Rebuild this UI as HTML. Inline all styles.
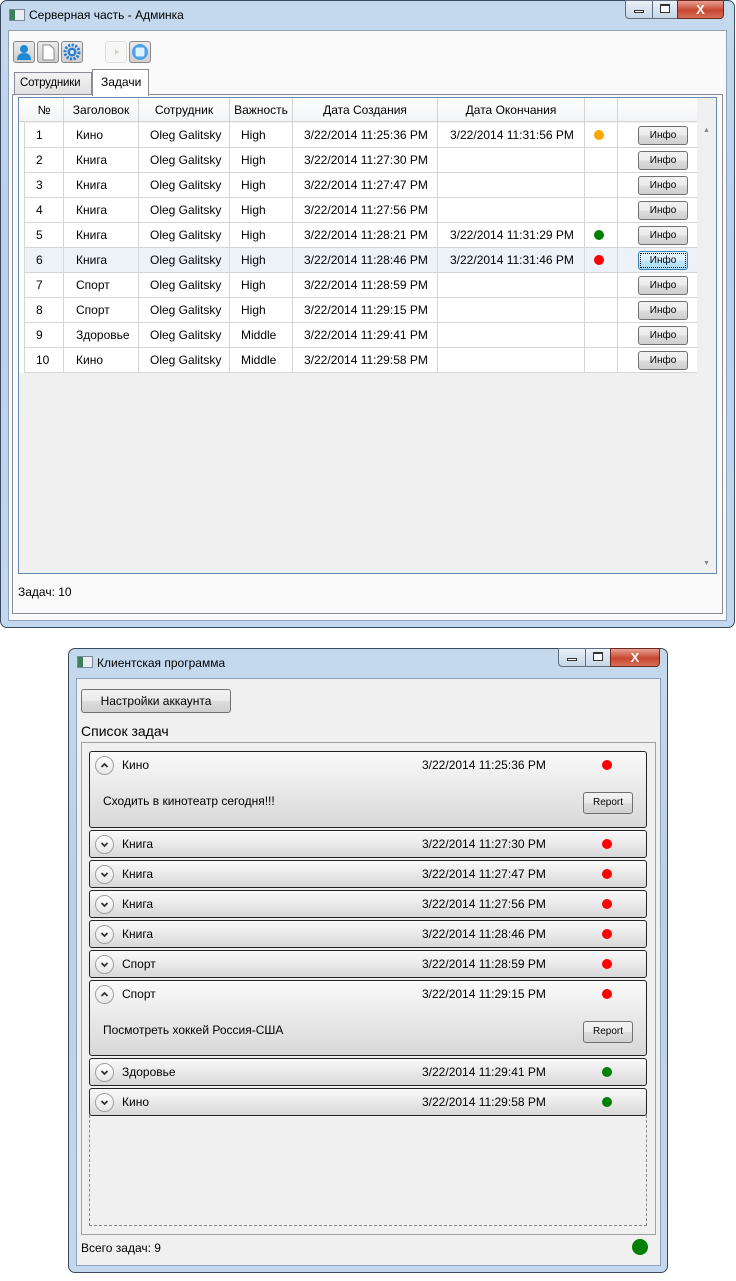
<!DOCTYPE html>
<html><head><meta charset="utf-8"><style>
*{box-sizing:border-box;margin:0;padding:0}
body{width:736px;height:1281px;background:#fff;position:relative;font-family:"Liberation Sans","DejaVu Sans",sans-serif;font-size:12px;color:#000;overflow:hidden}
.a{position:absolute}
.frame{border:1px solid #3b4a5c;border-radius:7px;background:linear-gradient(180deg,#c5d9ee 0%,#b8d0ea 40%,#c3d8ee 100%)}
.client{background:#f0f0f0;border:1px solid #8da2b8}
.ttl{font-size:12px;color:#000}
.appic{width:16px;height:12px;border:1px solid #7a8a99;background:linear-gradient(90deg,#3d7f5a 0 5px,#e8eef4 5px)}
.wb{height:19px;border:1px solid #5f6f80;background:linear-gradient(#e9f0f8,#c7d6e6);}
.xb{height:19px;border:1px solid #6b2a20;background:linear-gradient(#e9a193,#c8462f 55%,#d6705a);color:#fff;font-weight:bold;text-align:center;font-size:13px;line-height:17px}
.cell{position:absolute;top:0;height:25px;line-height:24px;border-right:1px solid #d5d5d5}
.row{position:absolute;left:25px;width:672px;height:25px;border-bottom:1px solid #d5d5d5;background:#fff}
.btn{position:absolute;border:1px solid #707070;border-radius:3px;background:linear-gradient(#f2f2f2 0%,#ebebeb 50%,#dddddd 51%,#cfcfcf 100%);text-align:center}
.info{left:613px;top:3px;width:50px;height:19px;font-size:10px;line-height:17px}
.dot{position:absolute;border-radius:50%}
.exp{position:absolute;left:89px;width:558px;border:1px solid #222;border-radius:3px;background:linear-gradient(#fafafa,#e2e2e2 70%,#d8d8d8)}
.chev{position:absolute;left:5px;top:4px;width:19px;height:19px;border:1px solid #a0a0a0;border-radius:50%;background:linear-gradient(#fff,#e6e6e6)}
.chev svg{position:absolute;left:0;top:0}
.et{position:absolute;left:32px;top:6px}
.ed{position:absolute;left:332px;top:6px}
.edot{position:absolute;left:512px;top:8px;width:10px;height:10px;border-radius:50%}
</style></head><body>

<!-- Window 1 -->
<div class="a frame" style="left:0;top:0;width:735px;height:628px"></div>
<div class="a appic" style="left:9px;top:9px"></div>
<div class="a ttl" style="left:29px;top:8px">Серверная часть - Админка</div>
<div class="a wb" style="left:625px;top:0;width:28px;border-radius:0 0 0 4px"><div style="margin:9px auto 0;width:10px;height:3px;border:1px solid #333;background:#fff"></div></div>
<div class="a wb" style="left:652px;top:0;width:26px"><div style="margin:3px auto 0;width:10px;height:9px;border:1px solid #333;border-top-width:2px;background:#fff"></div></div>
<div class="a xb" style="left:677px;top:0;width:47px;border-radius:0 0 4px 0">X</div>
<div class="a client" style="left:8px;top:30px;width:719px;height:591px;background:#fafafa"></div>

<!-- toolbar -->
<div class="a" style="left:13px;top:41px;width:22px;height:22px;border:1px solid #888;border-radius:3px;background:linear-gradient(#eaeaea,#cfcfcf)"><svg width="20" height="20"><circle cx="10" cy="7" r="4" fill="#1e8ad6"/><path d="M3 18 Q3 11 10 11 Q17 11 17 18Z" fill="#1e8ad6"/></svg></div>
<div class="a" style="left:37px;top:41px;width:22px;height:22px;border:1px solid #888;border-radius:3px;background:linear-gradient(#eaeaea,#cfcfcf)"><svg width="20" height="20"><path d="M5 3h7l4 4v11H5Z" fill="#fff" stroke="#888"/></svg></div>
<div class="a" style="left:61px;top:41px;width:22px;height:22px;border:1px solid #888;border-radius:3px;background:linear-gradient(#eaeaea,#cfcfcf)"><svg width="20" height="20"><circle cx="10" cy="10" r="7" fill="none" stroke="#2a7fd0" stroke-width="3" stroke-dasharray="2.2 1.4"/><circle cx="10" cy="10" r="4.5" fill="#2a7fd0"/><circle cx="10" cy="10" r="2" fill="#dfe9f5"/></svg></div>
<div class="a" style="left:105px;top:41px;width:22px;height:22px;border:1px solid #ddd;border-radius:3px;background:#f6f6f6"><svg width="20" height="20"><path d="M9 7l4 3-4 3Z" fill="#cfd8c0"/></svg></div>
<div class="a" style="left:129px;top:41px;width:22px;height:22px;border:1px solid #888;border-radius:3px;background:linear-gradient(#eaeaea,#cfcfcf)"><svg width="20" height="20"><circle cx="10" cy="10" r="8" fill="#4aa3ea"/><rect x="5.5" y="5.5" width="9" height="9" rx="2" fill="#dff0ff"/></svg></div>

<!-- tabs -->
<div class="a" style="left:14px;top:72px;width:78px;height:23px;border:1px solid #898c95;border-bottom:none;background:linear-gradient(#f3f3f3,#e0e0e0);padding:4px 0 0 5px;font-size:11.5px;letter-spacing:-0.2px">Сотрудники</div>
<div class="a" style="left:92px;top:69px;width:57px;height:27px;border:1px solid #898c95;border-bottom:none;background:#fff;padding:5px 0 0 8px;z-index:2">Задачи</div>
<div class="a" style="left:12px;top:94px;width:711px;height:520px;border:1px solid #898c95;background:#fafafa"></div>

<!-- grid -->
<div class="a" style="left:18px;top:97px;width:699px;height:477px;border:1px solid #6889b0;background:#f0f0f0"></div>
<div class="a" style="left:19px;top:98px;width:678px;height:24px;background:linear-gradient(#fff,#f3f4f6);border-bottom:1px solid #d5d5d5">
 <div class="cell" style="left:6px;width:39px;text-align:center">№</div>
 <div class="cell" style="left:45px;width:75px;text-align:center">Заголовок</div>
 <div class="cell" style="left:120px;width:91px;text-align:center">Сотрудник</div>
 <div class="cell" style="left:211px;width:63px;text-align:center">Важность</div>
 <div class="cell" style="left:274px;width:145px;text-align:center">Дата Создания</div>
 <div class="cell" style="left:419px;width:147px;text-align:center">Дата Окончания</div>
 <div class="cell" style="left:566px;width:33px"></div>
</div>
<div class="a" style="left:697px;top:122px;width:19px;height:451px;background:#f0f0f0"></div>
<div class="a" style="left:703px;top:127px;font-size:7px;color:#888">▲</div>
<div class="a" style="left:703px;top:560px;font-size:7px;color:#888">▼</div>
<div class="a" style="left:19px;top:122px;width:6px;height:251px;background:#fff;border-right:1px solid #d5d5d5"></div>

<div class="row" style="top:123px"><div class="cell" style="left:0;width:39px;padding-left:11px">1</div><div class="cell" style="left:39px;width:75px;padding-left:12px">Кино</div><div class="cell" style="left:114px;width:91px;padding-left:11px">Oleg Galitsky</div><div class="cell" style="left:205px;width:63px;padding-left:11px">High</div><div class="cell" style="left:268px;width:145px;padding-left:11px">3/22/2014 11:25:36 PM</div><div class="cell" style="left:413px;width:147px;padding-left:12px">3/22/2014 11:31:56 PM</div><div class="cell" style="left:560px;width:33px"></div><div class="dot" style="left:569px;top:7px;width:10px;height:10px;background:#ffa500"></div><div class="btn info">Инфо</div></div>
<div class="row" style="top:148px"><div class="cell" style="left:0;width:39px;padding-left:11px">2</div><div class="cell" style="left:39px;width:75px;padding-left:12px">Книга</div><div class="cell" style="left:114px;width:91px;padding-left:11px">Oleg Galitsky</div><div class="cell" style="left:205px;width:63px;padding-left:11px">High</div><div class="cell" style="left:268px;width:145px;padding-left:11px">3/22/2014 11:27:30 PM</div><div class="cell" style="left:413px;width:147px"></div><div class="cell" style="left:560px;width:33px"></div><div class="btn info">Инфо</div></div>
<div class="row" style="top:173px"><div class="cell" style="left:0;width:39px;padding-left:11px">3</div><div class="cell" style="left:39px;width:75px;padding-left:12px">Книга</div><div class="cell" style="left:114px;width:91px;padding-left:11px">Oleg Galitsky</div><div class="cell" style="left:205px;width:63px;padding-left:11px">High</div><div class="cell" style="left:268px;width:145px;padding-left:11px">3/22/2014 11:27:47 PM</div><div class="cell" style="left:413px;width:147px"></div><div class="cell" style="left:560px;width:33px"></div><div class="btn info">Инфо</div></div>
<div class="row" style="top:198px"><div class="cell" style="left:0;width:39px;padding-left:11px">4</div><div class="cell" style="left:39px;width:75px;padding-left:12px">Книга</div><div class="cell" style="left:114px;width:91px;padding-left:11px">Oleg Galitsky</div><div class="cell" style="left:205px;width:63px;padding-left:11px">High</div><div class="cell" style="left:268px;width:145px;padding-left:11px">3/22/2014 11:27:56 PM</div><div class="cell" style="left:413px;width:147px"></div><div class="cell" style="left:560px;width:33px"></div><div class="btn info">Инфо</div></div>
<div class="row" style="top:223px"><div class="cell" style="left:0;width:39px;padding-left:11px">5</div><div class="cell" style="left:39px;width:75px;padding-left:12px">Книга</div><div class="cell" style="left:114px;width:91px;padding-left:11px">Oleg Galitsky</div><div class="cell" style="left:205px;width:63px;padding-left:11px">High</div><div class="cell" style="left:268px;width:145px;padding-left:11px">3/22/2014 11:28:21 PM</div><div class="cell" style="left:413px;width:147px;padding-left:12px">3/22/2014 11:31:29 PM</div><div class="cell" style="left:560px;width:33px"></div><div class="dot" style="left:569px;top:7px;width:10px;height:10px;background:#008000"></div><div class="btn info">Инфо</div></div>
<div class="row" style="top:248px;background:#edf2f9"><div class="cell" style="left:0;width:39px;padding-left:11px">6</div><div class="cell" style="left:39px;width:75px;padding-left:12px">Книга</div><div class="cell" style="left:114px;width:91px;padding-left:11px">Oleg Galitsky</div><div class="cell" style="left:205px;width:63px;padding-left:11px">High</div><div class="cell" style="left:268px;width:145px;padding-left:11px">3/22/2014 11:28:46 PM</div><div class="cell" style="left:413px;width:147px;padding-left:12px">3/22/2014 11:31:46 PM</div><div class="cell" style="left:560px;width:33px"></div><div class="dot" style="left:569px;top:7px;width:10px;height:10px;background:#f00"></div><div class="btn info" style="border-color:#3c7fb1;background:linear-gradient(#eaf6fd,#d9f0fc 50%,#bee6fd 51%,#a7d9f5);outline:1px dotted #000;outline-offset:-3px">Инфо</div></div>
<div class="row" style="top:273px"><div class="cell" style="left:0;width:39px;padding-left:11px">7</div><div class="cell" style="left:39px;width:75px;padding-left:12px">Спорт</div><div class="cell" style="left:114px;width:91px;padding-left:11px">Oleg Galitsky</div><div class="cell" style="left:205px;width:63px;padding-left:11px">High</div><div class="cell" style="left:268px;width:145px;padding-left:11px">3/22/2014 11:28:59 PM</div><div class="cell" style="left:413px;width:147px"></div><div class="cell" style="left:560px;width:33px"></div><div class="btn info">Инфо</div></div>
<div class="row" style="top:298px"><div class="cell" style="left:0;width:39px;padding-left:11px">8</div><div class="cell" style="left:39px;width:75px;padding-left:12px">Спорт</div><div class="cell" style="left:114px;width:91px;padding-left:11px">Oleg Galitsky</div><div class="cell" style="left:205px;width:63px;padding-left:11px">High</div><div class="cell" style="left:268px;width:145px;padding-left:11px">3/22/2014 11:29:15 PM</div><div class="cell" style="left:413px;width:147px"></div><div class="cell" style="left:560px;width:33px"></div><div class="btn info">Инфо</div></div>
<div class="row" style="top:323px"><div class="cell" style="left:0;width:39px;padding-left:11px">9</div><div class="cell" style="left:39px;width:75px;padding-left:12px">Здоровье</div><div class="cell" style="left:114px;width:91px;padding-left:11px">Oleg Galitsky</div><div class="cell" style="left:205px;width:63px;padding-left:11px">Middle</div><div class="cell" style="left:268px;width:145px;padding-left:11px">3/22/2014 11:29:41 PM</div><div class="cell" style="left:413px;width:147px"></div><div class="cell" style="left:560px;width:33px"></div><div class="btn info">Инфо</div></div>
<div class="row" style="top:348px"><div class="cell" style="left:0;width:39px;padding-left:11px">10</div><div class="cell" style="left:39px;width:75px;padding-left:12px">Кино</div><div class="cell" style="left:114px;width:91px;padding-left:11px">Oleg Galitsky</div><div class="cell" style="left:205px;width:63px;padding-left:11px">Middle</div><div class="cell" style="left:268px;width:145px;padding-left:11px">3/22/2014 11:29:58 PM</div><div class="cell" style="left:413px;width:147px"></div><div class="cell" style="left:560px;width:33px"></div><div class="btn info">Инфо</div></div>

<div class="a" style="left:18px;top:585px">Задач: 10</div>

<!-- Window 2 -->
<div class="a frame" style="left:68px;top:648px;width:600px;height:625px"></div>
<div class="a appic" style="left:77px;top:656px"></div>
<div class="a ttl" style="left:97px;top:656px">Клиентская программа</div>
<div class="a wb" style="left:558px;top:648px;width:28px;border-radius:0 0 0 4px"><div style="margin:9px auto 0;width:10px;height:3px;border:1px solid #333;background:#fff"></div></div>
<div class="a wb" style="left:585px;top:648px;width:26px"><div style="margin:3px auto 0;width:10px;height:9px;border:1px solid #333;border-top-width:2px;background:#fff"></div></div>
<div class="a xb" style="left:610px;top:648px;width:50px;border-radius:0 0 4px 0">X</div>
<div class="a client" style="left:76px;top:678px;width:585px;height:588px"></div>

<div class="btn" style="left:81px;top:689px;width:150px;height:24px;line-height:22px;border-color:#707070">Настройки аккаунта</div>
<div class="a" style="left:81px;top:723px;font-size:14px">Список задач</div>
<div class="a" style="left:81px;top:742px;width:575px;height:493px;border:1px solid #a0a0a0;background:#f0f0f0"></div>
<div class="a" style="left:89px;top:1110px;width:558px;height:116px;border:1px dashed #888;border-top:none"></div>

<div class="exp" style="top:751px;height:77px"><div class="chev"><svg width="17" height="17"><path d="M5.5 10 L8.5 7 L11.5 10" fill="none" stroke="#333" stroke-width="1.8"/></svg></div><div class="et">Кино</div><div class="ed">3/22/2014 11:25:36 PM</div><div class="edot" style="background:#f00"></div><div class="a" style="left:13px;top:42px">Сходить в кинотеатр сегодня!!!</div><div class="btn" style="left:493px;top:40px;width:50px;height:22px;font-size:10px;line-height:20px">Report</div></div>
<div class="exp" style="top:830px;height:28px"><div class="chev"><svg width="17" height="17"><path d="M5.5 7 L8.5 10 L11.5 7" fill="none" stroke="#333" stroke-width="1.8"/></svg></div><div class="et">Книга</div><div class="ed">3/22/2014 11:27:30 PM</div><div class="edot" style="background:#f00"></div></div>
<div class="exp" style="top:860px;height:28px"><div class="chev"><svg width="17" height="17"><path d="M5.5 7 L8.5 10 L11.5 7" fill="none" stroke="#333" stroke-width="1.8"/></svg></div><div class="et">Книга</div><div class="ed">3/22/2014 11:27:47 PM</div><div class="edot" style="background:#f00"></div></div>
<div class="exp" style="top:890px;height:28px"><div class="chev"><svg width="17" height="17"><path d="M5.5 7 L8.5 10 L11.5 7" fill="none" stroke="#333" stroke-width="1.8"/></svg></div><div class="et">Книга</div><div class="ed">3/22/2014 11:27:56 PM</div><div class="edot" style="background:#f00"></div></div>
<div class="exp" style="top:920px;height:28px"><div class="chev"><svg width="17" height="17"><path d="M5.5 7 L8.5 10 L11.5 7" fill="none" stroke="#333" stroke-width="1.8"/></svg></div><div class="et">Книга</div><div class="ed">3/22/2014 11:28:46 PM</div><div class="edot" style="background:#f00"></div></div>
<div class="exp" style="top:950px;height:28px"><div class="chev"><svg width="17" height="17"><path d="M5.5 7 L8.5 10 L11.5 7" fill="none" stroke="#333" stroke-width="1.8"/></svg></div><div class="et">Спорт</div><div class="ed">3/22/2014 11:28:59 PM</div><div class="edot" style="background:#f00"></div></div>
<div class="exp" style="top:980px;height:76px"><div class="chev"><svg width="17" height="17"><path d="M5.5 10 L8.5 7 L11.5 10" fill="none" stroke="#333" stroke-width="1.8"/></svg></div><div class="et">Спорт</div><div class="ed">3/22/2014 11:29:15 PM</div><div class="edot" style="background:#f00"></div><div class="a" style="left:13px;top:42px">Посмотреть хоккей Россия-США</div><div class="btn" style="left:493px;top:40px;width:50px;height:22px;font-size:10px;line-height:20px">Report</div></div>
<div class="exp" style="top:1058px;height:28px"><div class="chev"><svg width="17" height="17"><path d="M5.5 7 L8.5 10 L11.5 7" fill="none" stroke="#333" stroke-width="1.8"/></svg></div><div class="et">Здоровье</div><div class="ed">3/22/2014 11:29:41 PM</div><div class="edot" style="background:#008000"></div></div>
<div class="exp" style="top:1088px;height:28px"><div class="chev"><svg width="17" height="17"><path d="M5.5 7 L8.5 10 L11.5 7" fill="none" stroke="#333" stroke-width="1.8"/></svg></div><div class="et">Кино</div><div class="ed">3/22/2014 11:29:58 PM</div><div class="edot" style="background:#008000"></div></div>

<div class="a" style="left:81px;top:1241px">Всего задач: 9</div>
<div class="dot" style="left:632px;top:1239px;width:16px;height:16px;background:#008000"></div>
</body></html>
